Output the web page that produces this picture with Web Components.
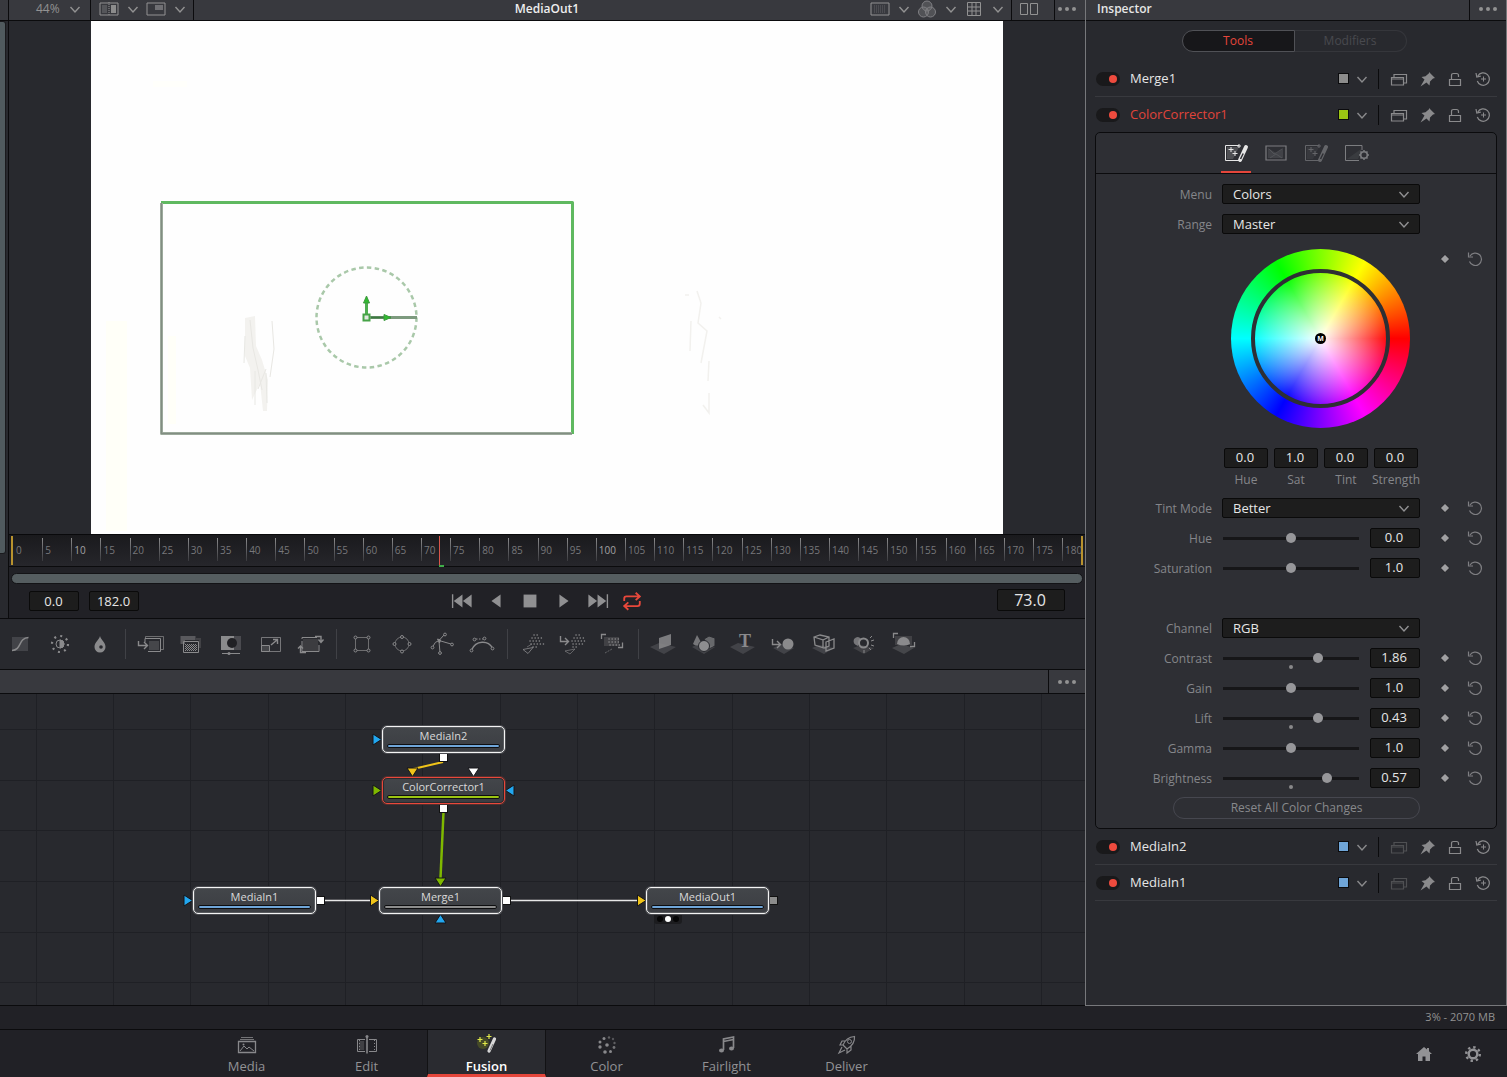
<!DOCTYPE html>
<html lang="en">
<head>
<meta charset="utf-8">
<title>Fusion</title>
<style>
  html, body { margin: 0; height: 100%; background: #212126; }
  body { font-family: "Open Sans", "Noto Sans", sans-serif; font-size: 13px; line-height: 18px; color: #929292; }
</style>
</head>
<body>
<fusion-app></fusion-app>
<script>
const ICONS = {
  chevron: '<path d="M7.500 10l4.500 5 4.500-5" stroke-width="1.400"/>',
  dots: '<g fill="currentColor" stroke="none"><circle cx="5" cy="12" r="2"/><circle cx="12" cy="12" r="2"/><circle cx="19" cy="12" r="2"/></g>',
  split: '<path d="M3 6h18v12H3z"/><path d="M5 8h5v8H5z" fill="#55565a" stroke="none"/><path d="M14 8h5v8h-5z" fill="#8c8c8c" stroke="none"/><path d="M12 5v14" stroke-dasharray="1 1"/>',
  pip: '<path d="M3 6h18v12H3z"/><path d="M11 8h8v5h-8z" fill="#707074" stroke="none"/>',
  roi: '<path d="M3 6h18v12H3z"/><path d="M6 9h12M6 11h12M6 13h12M6 15h12" stroke-dasharray="1 1" stroke="#606165"/>',
  rgb: '<g fill="#77777b" fill-opacity=".4" stroke="#808084"><circle cx="12" cy="9" r="5"/><circle cx="8.500" cy="15" r="5"/><circle cx="15.500" cy="15" r="5"/></g>',
  grid: '<path d="M5.500 5.500h13v13h-13zM10 5v14M14 5v14M5 10h14M5 14h14"/>',
  dual: '<path d="M3.500 6.500h7v11h-7zM13.500 6.500h7v11h-7z"/>',
  windows: '<path d="M4.500 10.500h12v7.500h-12zM4.500 12h12" stroke-width="1.200"/><path d="M7 10V7.500h12.500v8.500H17" stroke-width="1.200"/>',
  pin: '<path d="M14 5l6 6-2 .5-3 3-.5 4-3-3L5.500 19.500l4-7-3-2.500 4-.7 3.500-3z" fill="currentColor" stroke="none"/>',
  lock: '<path d="M6.500 12.500h11v6h-11z" stroke-width="1.200"/><path d="M8.500 12V8.500Q8.500 6.500 10.500 6.500h3Q15.500 6.500 15.500 8.500V10" stroke-width="1.200"/>',
  history: '<path d="M6.800 9A6.200 6.200 0 1 1 6.300 14M5 6l.8 4 4-.8" stroke-width="1.200"/><path d="M12.500 9.500v5M10 12h5"/>',
  undo: '<path d="M7 9A6.200 6.200 0 1 1 6.500 14.500M5.500 5.500v4.500H10" stroke-width="1.200"/>',
  key: '<path d="M12 6.500l5.500 5.500-5.500 5.500L6.500 12z" fill="#a0a0a2" stroke="#17171a"/>',
  wandTab: '<path d="M15 4.500H1.500v15h16"/><path d="M3 6h12l-6 12H3z" fill="currentColor" opacity=".18" stroke="none"/><path d="M22 6l-6 13" stroke-width="4" stroke-linecap="round"/><path d="M19.200 12.500L16.500 18" stroke="#2e2f34" stroke-width="1.500"/><path d="M7 6v5M4.500 8.500h5M11 10v5M8.500 12.500h5M15 3v4M13 5h4"/>',
  blendTab: '<path d="M2 5h20v14H2z" stroke-width="1.200"/><path d="M4 7l8 5 7-5v10H4z" fill="currentColor" opacity=".25" stroke="none"/><path d="M5 8l5 5 8-5M6 17l6-4 6 4" opacity=".3"/>',
  gearTab: '<path d="M18 9V4.500H1.500v15H15"/><path d="M3 18h11l3-6V8z" fill="currentColor" opacity=".15" stroke="none"/><circle cx="20" cy="14" r="3.300" stroke-width="1.600"/><path d="M20 9v1.500M20 17.500V19M15 14h1.500M23.500 14H25M16.500 10.500l1 1M22.500 16.500l1 1M16.500 17.500l1-1M22.500 11.500l1-1" stroke-width="1.500"/>',
  first: '<g fill="currentColor" stroke="none"><path d="M1 4.500h1.500v15H1zM12.500 5v14L3 12zM22.500 5v14L13 12z"/></g>',
  back: '<path d="M17 5v14L7 12z" fill="currentColor" stroke="none"/>',
  stop: '<path d="M5 5h14v14H5z" fill="currentColor" stroke="none"/>',
  play: '<path d="M7 5v14l10-7z" fill="currentColor" stroke="none"/>',
  last: '<g fill="currentColor" stroke="none"><path d="M21.500 4.500H23v15h-1.500zM11.500 5v14L21 12zM1.500 5v14L11 12z"/></g>',
  loop: '<path d="M3.500 12V9.500Q3.500 7 6 7H20M16 3l4.500 4-4.500 4M20.500 12v3q0 2.500-2.500 2.500H4M8 13.500l-4.500 4L8 21.500" stroke-width="2"/>',
  curve: '<path d="M4 5h16v14H4z" fill="currentColor" opacity=".28" stroke="none"/><path d="M4 18.500C14 18 10 6 20.500 5.500" stroke-width="1.500"/>',
  bright: '<circle cx="12" cy="12" r="4"/><path d="M12 8a4 4 0 0 1 0 8z" fill="currentColor"/><circle cx="12" cy="12" r="8" stroke-width="2.200" stroke-dasharray="2 4.283"/>',
  drop: '<path d="M12 4c1 4 5.500 6 5.500 11a5.500 5.500 0 0 1-11 0C6.500 10 11 8 12 4z" fill="currentColor" stroke="none"/><circle cx="13" cy="15" r="1.800" fill="#28292e" stroke="none"/>',
  mediaIn: '<path d="M6.500 7V4.500h18v13H22" opacity=".7"/><path d="M6 10V6.500h15.500v13H9" /><path d="M10 9h10v9H10z" fill="currentColor" opacity=".3" stroke="none"/><path d="M-.5 9v4.500H8M5 10l3.500 3.500L5 17" stroke-width="1.400"/>',
  merge: '<path d="M1.500 4h15v4H6v4H1.500z" fill="currentColor" opacity=".5" stroke="none"/><path d="M17 6h5v10h-2V8h-3z" fill="currentColor" opacity=".25" stroke="none"/><path d="M4.500 9.500h15v11h-15z"/><path d="M6 12.500h12M6 14.500h12M6 16.500h12M6 18.500h12" stroke-dasharray="1 1"/><path d="M7 13.500h12M7 15.500h12M7 17.500h12" stroke-dasharray="1 1"/>',
  matte: '<path d="M2 4h13v14H2z" fill="currentColor" stroke="none"/><path d="M13 4h9v14h-9z" fill="currentColor" opacity=".35" stroke="none"/><circle cx="13" cy="11" r="5" fill="#202024" stroke="none"/><path d="M3 21.500h18"/><circle cx="10" cy="21.500" r="1.500" fill="currentColor" stroke="none"/>',
  resize: '<path d="M2.500 5.500h19v14h-19z" opacity=".8"/><path d="M2.500 13.500h8v6h-8z" fill="#45464a"/><path d="M12 13l6-5M14 7.500h4.500V12" stroke-width="1.400"/>',
  xform: '<path d="M3 9v10.500h17V13M3 7V5.500h15" /><path d="M4 7h15v12H4z" fill="currentColor" opacity=".2" stroke="none"/><path d="M16 4.500h6V10M19.500 7.500L22 10.500l2.500-3M7 20.500H1.500V14M-1 16.500L1.500 14 4 16.500" stroke-width="1.400"/>',
  rect: '<path d="M5.500 5.500h13v13h-13z" opacity=".7"/><g fill="#28292e"><circle cx="5.500" cy="5.500" r="1.500"/><circle cx="18.500" cy="5.500" r="1.500"/><circle cx="5.500" cy="18.500" r="1.500"/><circle cx="18.500" cy="18.500" r="1.500"/></g>',
  ellipse: '<circle cx="12" cy="12" r="7" opacity=".7"/><g fill="#28292e"><circle cx="12" cy="5" r="1.500"/><circle cx="12" cy="19.500" r="1.500"/><circle cx="4.500" cy="12" r="1.500"/><circle cx="19.500" cy="12" r="1.500"/></g>',
  poly: '<path d="M2.500 15Q5 9 9 8.500L21 12M9 8.500L14 3M9 9l1 12" /><g fill="#28292e"><circle cx="2.500" cy="15.500" r="1.400"/><circle cx="22" cy="12.500" r="1.400"/><circle cx="15" cy="2.500" r="1.400"/><circle cx="10" cy="21" r="1.400"/></g><path d="M7.500 7l3 1-1 3z" fill="currentColor"/>',
  bspline: '<path d="M1.500 18C6 8 18 8 22.500 16" stroke-width="1.400"/><path d="M6 7h7" stroke-dasharray="1.500 1.500"/><g fill="#28292e"><circle cx="1.500" cy="18.500" r="1.400"/><circle cx="22.500" cy="16.500" r="1.400"/><circle cx="4.500" cy="7.500" r="1.400"/><circle cx="14.500" cy="6.500" r="1.400"/></g>',
  emit: '<g stroke-width="1.500" stroke-linecap="round" stroke-dasharray=".1 3"><path d="M13 3h6M11 6h12M9 9h12M10 12h13M12 15h6"/></g><path d="M2 17.500l10-2-5 6z" opacity=".8"/><path d="M6 15l5-3" opacity=".6"/>',
  emitIn: '<g stroke-width="1.500" stroke-linecap="round" stroke-dasharray=".1 3"><path d="M15 3h6M13 6h12M11 9h14M12 12h10M12 15h6"/></g><path d="M4 19l10-2-5 5z" opacity=".6"/><path d="M-.5 4v5.500H7M4 6l3.500 3.500L4 13" stroke-width="1.400"/>',
  emitOut: '<path d="M3 5h15v9H3z" fill="currentColor" opacity=".25" stroke="none"/><g stroke-width="1.500" stroke-linecap="round" stroke-dasharray=".1 3"><path d="M8 7h10M8 10h12M9 13h10"/></g><path d="M.5 7V2.500H5M21.500 10.500v5H17" stroke-width="1.300"/><path d="M4 21l7-4" stroke-dasharray="2 1" opacity=".6"/>',
  plane: '<path d="M-2 15l9-4 17 4-12 7z" fill="currentColor" opacity=".28" stroke="none"/><path d="M7 6l12-4v11L7 17z" fill="currentColor" stroke="none" opacity=".85"/>',
  shapes: '<path d="M0 15l8-4 15 4-11 7z" fill="currentColor" opacity=".28" stroke="none"/><path d="M5 3l5 9q-5 3-9 0z" fill="currentColor" stroke="none" opacity=".8"/><path d="M12 7l5-3 6 2v8l-6 3z" fill="currentColor" stroke="#28292e" opacity=".65"/><circle cx="12" cy="14" r="5.500" fill="#8e8e90" stroke="#28292e"/>',
  text3d: '<path d="M-2 15l8-4 17 4-12 7z" fill="currentColor" opacity=".28" stroke="none"/><text x="13" y="15" text-anchor="middle" font-family="Liberation Serif, serif" font-weight="700" font-size="18" fill="currentColor" stroke="none">T</text>',
  sphereIn: '<path d="M1 16l8-4 13 4-10 6z" fill="currentColor" opacity=".28" stroke="none"/><circle cx="16" cy="12" r="5.500" fill="currentColor" stroke="none"/><path d="M.5 7v5.500H8M5 9l3.500 3.500L5 16" stroke-width="1.400"/>',
  camera: '<path d="M0 16l7-3 15 3-10 6z" fill="currentColor" opacity=".28" stroke="none"/><path d="M2 5l6-2 9 2v9l-5 2-9-3zM2 5l9 3v8M11 8l6-3M14 10l8-3v9l-8 3z" stroke-width="1.300"/>',
  light: '<path d="M1 16l8-3 13 3-10 6z" fill="currentColor" opacity=".25" stroke="none"/><path d="M2 7q4-4 7 0l-3 7q-6-2-4-7z" fill="currentColor" stroke="none" opacity=".8"/><circle cx="11.500" cy="11" r="4.500" stroke-width="2"/><path d="M18 6l2-2M19 9l3-1M19 13l3 1M17 16l2 2M12 18v3"/>',
  render: '<path d="M0 16l9-4 13 4-10 6z" fill="currentColor" opacity=".3" stroke="none"/><path d="M3 4h17v9H3z" fill="currentColor" opacity=".25" stroke="none"/><path d="M5 12a6.500 7 0 0 1 13 0q-6 3-13 0z" fill="currentColor" stroke="none"/><path d="M1.500 6V1.500H6M22.500 10v4.500H18" stroke-width="1.300"/>',
  media: '<path d="M6 4.500h12M5 6.500h14" opacity=".8"/><path d="M3.500 8.500h17v11h-17z" stroke-width="1.300"/><path d="M5 18l4-5 3 3 2-2 5 4"/><circle cx="8.500" cy="11.500" r="1" fill="currentColor" stroke="none"/>',
  edit: '<path d="M10 6.500H2.500v12H10M14 6.500h7.500v12H14"/><path d="M4 8h5v9H4z" fill="currentColor" opacity=".3" stroke="none"/><path d="M12 3v17.500" stroke-width="1.600"/><circle cx="12" cy="3.500" r="1.500" fill="currentColor" stroke="none"/><path d="M4.500 7v11M19.500 7v11" stroke-dasharray="1 2"/>',
  fusion: '<circle cx="8" cy="10" r="6" fill="#6d7a1c" opacity=".4" stroke="none"/><path d="M19.500 6L14 18" stroke="#d8d8d8" stroke-width="3.200" stroke-linecap="round"/><path d="M18 11l-3 6.500" stroke="#7c7c7c"/><path d="M5 4v5M2.500 6.500h5M10 8v5M7.500 10.500h5M14 1v5M11.500 3.500h5" stroke="#dfe84a" stroke-width="1.200"/>',
  color: '<g fill="currentColor" stroke="none"><circle cx="12" cy="12" r="1.800"/><circle cx="9" cy="5.500" r="1.500"/><circle cx="14" cy="4.500" r="1.200" opacity=".6"/><circle cx="18" cy="6" r="1.200" opacity=".5"/><circle cx="5" cy="9" r="1.500"/><circle cx="19.500" cy="10" r="1.200" opacity=".6"/><circle cx="5" cy="14" r="1.700"/><circle cx="19" cy="14.500" r="1.400" opacity=".8"/><circle cx="10" cy="19" r="1.800"/><circle cx="15.500" cy="18.500" r="1.500"/></g>',
  fairlight: '<path d="M8.500 17V6l10-2v11M8.500 8.500l10-2" stroke-width="1.700"/><ellipse cx="6.500" cy="17.500" rx="2.500" ry="2" fill="currentColor" stroke="none"/><ellipse cx="16.500" cy="15.500" rx="2.500" ry="2" fill="currentColor" stroke="none"/>',
  deliver: '<path d="M8 12C10 7 14 4 19.500 3.500 20 9 17 13 12 16zM8 12H5l2-4h3M12 16v4l4-3v-4M7 14l-3 6 6-3" stroke-width="1.200"/><circle cx="14.500" cy="8.500" r="2"/>',
  home: '<path d="M12 5l-8 7h2v7h4.500v-4.500h3V19H18v-7h2l-3-2.700V6h-2v1.600z" fill="currentColor" stroke="none"/>',
  gear: '<circle cx="12" cy="12" r="4.300" stroke-width="2.400"/><circle cx="12" cy="12" r="6.800" stroke-width="2.400" stroke-dasharray="2.400 2.941"/>'
};

/* Base class: each component supplies a stylesheet and its markup. */
class Base extends HTMLElement {
  connectedCallback() {
    if (this.shadowRoot) return;
    const t = document.createElement('template');
    t.innerHTML = `<style>*{box-sizing:border-box}button,input,select{font:inherit;color:inherit}button{background:none;border:0;padding:0;margin:0}${this.constructor.css || ''}</style>${this.html()}`;
    this.attachShadow({ mode: 'open' }).append(t.content.cloneNode(true));
  }
  a(n, d = '') { return this.getAttribute(n) ?? d; }
}

customElements.define('ui-icon', class extends Base {
  static css = ':host{display:block;flex:none;width:24px;height:24px}svg{display:block;width:100%;height:100%;overflow:visible}';
  html() { return `<svg viewBox="0 0 24 24" fill="none" stroke="currentColor" stroke-width="1" aria-hidden="true">${ICONS[this.a('name')]}</svg>`; }
});

/* Title bar shared by the viewer, node graph and inspector. */
customElements.define('title-bar', class extends Base {
  static css = `:host{display:grid;grid-template:100% / 1fr auto 1fr;flex:none;box-sizing:border-box;height:21px;background:#38393e;border-bottom:1px solid #0b0b0d;color:#929292}
    :host([tall]){height:24px}
    div{display:flex;align-items:stretch}.e{justify-content:flex-end}
    .m{color:#eee;font-size:12px;font-weight:600;line-height:18px}`;
  html() { return '<div><slot name="start"></slot></div><div class="m"><slot></slot></div><div class="e"><slot name="end"></slot></div>'; }
});
customElements.define('bar-cell', class extends Base {
  static css = `:host{display:flex;align-items:center;height:100%;box-sizing:border-box;padding-bottom:3px}
    :host([right]){border-right:1px solid #0b0b0d}:host([left]){border-left:1px solid #0b0b0d}:host([flat]){padding-bottom:0}`;
  html() { return '<slot></slot>'; }
});
customElements.define('icon-button', class extends Base {
  static css = `:host{display:flex;justify-content:center;align-items:center;width:var(--w,24px)}button{display:flex;justify-content:center;width:100%}
   ui-icon{width:var(--s,24px);height:var(--s,24px)}`;
  html() { return `<button type="button" aria-label="${this.a('icon')}"><ui-icon name="${this.a('icon')}"></ui-icon></button>`; }
});

customElements.define('time-ruler', class extends Base {
  static css = `:host{display:block;flex:none;box-sizing:border-box;height:33px;background:linear-gradient(#1a1a1d,#26262b);border-top:1px solid #09090b;border-bottom:1px solid #0b0b0d;padding:1px 2px 0}
    .r{position:relative;height:29px;border:solid #b8922e;border-width:0 2px}
    .t{display:flex;height:100%;overflow:hidden}
    span{flex:5 1 0;min-width:0;padding:7px 0 0 3px;font-size:10px;line-height:14px;color:#77777a;background:linear-gradient(#8a8a8c,#3a3a3e) 0 2px/1px 23px no-repeat;white-space:nowrap}
    span:first-child{background:none}span:last-child{flex-grow:3;overflow:hidden}
    span.b{color:#a2a2a4}
    i{position:absolute;left:calc(73 / 183 * 100%);top:0;width:1px;height:29px;background:#d8564a}
    u{position:absolute;left:calc(73 / 183 * 100%);bottom:-2px;width:5px;height:2px;background:#3fae49}`;
  html() {
    let s = '';
    for (let f = 0; f <= 180; f += 5) s += `<span${f === 10 || f === 100 ? ' class="b"' : ''}>${f}</span>`;
    return `<div class="r"><div class="t">${s}</div><i></i><u></u></div>`;
  }
});

customElements.define('transport-bar', class extends Base {
  static css = `:host{display:block;flex:none;background:#212126;border-bottom:1px solid #0b0b0d;padding-top:6px}
    .s{height:11px;margin:0 2px;border:1px solid #131316;border-radius:6px;background:#555d60}
    .g{display:grid;grid-template-columns:1fr auto 1fr;align-items:center;height:34px}
    .f{display:flex;gap:10px;padding-left:20px}.e{justify-content:flex-end;padding:0 20px 2px 0}
    input{width:50px;height:20px;background:#1d1d1d;border:1px solid #0a0a0a;border-radius:2px;color:#e6e6e6;text-align:center;padding:0 1px 0 0}
    .e input{width:68px;height:22px;font-size:16px;padding-right:2px}
    .m{display:flex;--w:34px;--s:22px;color:#909092}.on{color:#e8483b}`;
  html() { return `<div class="s"></div><div class="g"><div class="f"><input aria-label="Start frame" value="0.0"><input aria-label="End frame" value="182.0"></div>
    <div class="m">${['first','back','stop','play','last'].map(n => `<icon-button icon="${n}"></icon-button>`).join('')}<icon-button class="on" icon="loop"></icon-button></div>
    <div class="f e"><input aria-label="Current frame" value="73.0"></div></div>`; }
});

customElements.define('viewer-frame', class extends Base {
  static css = `:host{display:flex;justify-content:center;flex:1 1 0;min-height:0;background:#28292e}
    .c{height:100%;aspect-ratio:912/513;background:#fefefe}svg{display:block;width:100%;height:100%}`;
  html() { return `<div class="c"><svg viewBox="0 0 912 513" fill="none" role="img" aria-label="Viewer">
    <path d="M15 300h21v210H15zM77 315h8v88h-8z" fill="#fffff8"/><path d="M62 60h34v6H62z" fill="#fffffb"/>
    <path d="M154 297l10-2 1 30 6 14 6 20-1 31h-4l-3-28-8 17-2-32-5-12z" fill="#f3f2ef"/><path d="M159 299l3 28 5 22 4 20M167 368l8-20M181 300l2 28-4 28" stroke="#e8e7e3"/>
    <path d="M154 315l-1 27M164 350v34M175 352l1 30" stroke="#e8e8e4"/>
    <path d="M606 270l4 12-3 20 9 8-6 32M594 274l4 0M628 296l2 2M618 340l-1 20M612 384l6 8v-20M600 300l-1 30" stroke="#f2f1ee" stroke-width="1.500"/>
    <path d="M70 181.500h411.500V413" stroke="#5fb960" stroke-width="3" stroke-linejoin="round"/>
    <path d="M70.500 182v230.500H481" stroke="#a5b5a5" stroke-width="3" stroke-linejoin="round"/><path d="M70.500 182v230.500H481" stroke="#828d82" stroke-width="1.500"/>
    <circle cx="275.500" cy="296.500" r="50" stroke="#a9c8a9" stroke-width="2.500" stroke-dasharray="4.500 3.354"/>
    <path d="M276 296.500h50" stroke="#7d9a7e" stroke-width="3"/><path d="M280 296.500h20" stroke="#3c7a40" stroke-width="2"/><path d="M275.500 294v-14" stroke="#4fae50" stroke-width="3"/>
    <path d="M275.500 275l3 7h-6zM300 296.500l-7-3v6z" fill="#2fbb2f" stroke="#3f9a40"/><path d="M272.500 293.500h6v6h-6z" fill="#dfe8df" stroke="#46a347" stroke-width="2"/>
  </svg></div>`; }
});

customElements.define('viewer-panel', class extends Base {
  static css = `:host{display:flex;flex:1 1 0;min-height:0}
    .strip{display:flex;flex-direction:column;width:9px;flex:none;border-right:1px solid #0b0b0d;border-bottom:1px solid #0b0b0d;background:#28292e}
    .thumb{height:calc(100% - 64px);width:6px;background:#505a5e;border-radius:0 3px 3px 0;border:1px solid #1a1a1d;border-left:0}
    .track{flex:1;min-height:0}
    .v{flex:1;min-width:0;display:flex;flex-direction:column}
    .z{display:flex;align-items:center;padding-left:27px;line-height:18px;font-size:12px}
    bar-cell{--s:24px}.c{--w:23px}.k{--w:24px}`;
  html() { return `<div class="strip"><title-bar></title-bar><div class="track"><div class="thumb"></div></div></div><div class="v">
    <title-bar><bar-cell slot="start" right style="width:82px"><button class="z" type="button">44%</button><icon-button style="--w:32px" icon="chevron"></icon-button></bar-cell>
    <bar-cell slot="start" right style="width:103px;padding-left:6px"><icon-button class="k" icon="split"></icon-button><icon-button class="c" icon="chevron"></icon-button><icon-button class="k" icon="pip"></icon-button><icon-button class="c" icon="chevron"></icon-button></bar-cell>
    MediaOut1
    <bar-cell slot="end" style="padding-right:2px"><icon-button class="k" icon="roi"></icon-button><icon-button class="c" icon="chevron"></icon-button><icon-button class="k" icon="rgb"></icon-button><icon-button class="c" icon="chevron"></icon-button><icon-button class="k" icon="grid"></icon-button><icon-button class="c" icon="chevron"></icon-button></bar-cell>
    <bar-cell slot="end" left style="padding-left:5px;width:43px"><icon-button icon="dual"></icon-button></bar-cell>
    <bar-cell slot="end" left style="width:31px"><icon-button icon="dots"></icon-button></bar-cell></title-bar>
    <viewer-frame></viewer-frame><time-ruler></time-ruler><transport-bar></transport-bar></div>`; }
});

customElements.define('tool-shelf', class extends Base {
  static css = `:host{display:flex;align-items:center;flex:none;box-sizing:border-box;height:51px;background:#28292e;border-bottom:1px solid #0b0b0d;color:#8a8a8c;--w:40px}
    hr{width:1px;height:30px;margin:0 5px;border:0;background:#404146}`;
  html() { return [['curve','bright','drop'],['mediaIn','merge','matte','resize','xform'],['rect','ellipse','poly','bspline'],['emit','emitIn','emitOut'],['plane','shapes','text3d','sphereIn','camera','light','render']]
    .map(g => g.map(n => `<icon-button icon="${n}"></icon-button>`).join('')).join('<hr>'); }
});

customElements.define('graph-node', class extends Base {
  static css = `:host{position:absolute;display:block;box-sizing:border-box;width:123px;height:27px;padding:1px 4px 0;border:1px solid #f4f4f4;border-radius:5px;background:linear-gradient(#43464a,#3b3d42);box-shadow:0 0 0 1px #4a4b50,inset 0 0 0 1px #5a5c60;color:#d9d9d9;font-size:11px;line-height:16px;text-align:center}
    :host([selected]){border-color:#e8483b;box-shadow:0 0 0 1px #55302f,inset 0 0 0 1px #2a2a2e}
    i{display:block;height:4px;border:1px solid #0e0e10;border-radius:2px;background:var(--c)}`;
  html() { return '<slot></slot><i></i>'; }
});

customElements.define('node-graph', class extends Base {
  static css = `:host{display:flex;flex-direction:column;flex:0 0 336px}
    .c{position:relative;flex:1;background:#28292e;border-bottom:1px solid #0b0b0d;overflow:hidden}
    svg{position:absolute;inset:0;width:100%;height:100%}
    .v{position:absolute;left:654px;top:219px;display:flex;justify-content:center;align-items:center;gap:2px;width:28px;height:11px;background:#1c1c1f;border-radius:0 0 3px 3px}
    .v i{width:6px;height:6px;border-radius:50%;background:#050506}.v i:nth-child(2){background:#fff}`;
  html() {
    const tri = (x, y, dir, c) => `<path d="M-4-5.500L4.500 0-4 5.500z" transform="translate(${x} ${y}) rotate(${dir})" fill="${c}" stroke="#151518" stroke-width="1"/>`;
    const sq = (x, y, c = '#fff') => `<rect x="${x - 4}" y="${y - 4}" width="8" height="8" fill="${c}" stroke="#111"/>`;
    const B = '#22a7f0', Y = '#f0c419', G = '#7fb800', W = '#fff';
    return `<title-bar tall><bar-cell slot="end" left flat style="width:37px;padding-left:6px"><icon-button icon="dots"></icon-button></bar-cell></title-bar>
    <div class="c"><svg aria-hidden="true"><defs><pattern id="g" x="36" y="35" width="232" height="152" patternUnits="userSpaceOnUse"><path d="M.5 0v152M77.500 0v152M154.500 0v152M0 .5h232M0 51.500h232M0 101.500h232" stroke="#1f2025"/></pattern></defs>
    <rect width="100%" height="100%" fill="url(#g)"/>
    <path d="M443 68L413 75" stroke="${Y}" stroke-width="2"/><path d="M443.500 118L440.500 184" stroke="${G}" stroke-width="2.500"/><path d="M324 206.500h47M510 206.500h128" stroke="#e8e8e8" stroke-width="1.400"/>
    ${tri(377,45.5,0,B)}${tri(412.500,78,90,Y)}${tri(473.500,78,90,W)}${tri(377,96.500,0,G)}${tri(510,96.500,180,B)}${tri(440.500,188,90,G)}${tri(440.500,225,270,B)}${tri(188,206.500,0,B)}${tri(374.500,206.500,0,Y)}${tri(641.500,206.500,0,Y)}
    ${sq(443.500,63.500)}${sq(443.500,114.500)}${sq(320.500,206.500)}${sq(506.500,206.500)}${sq(773.500,206.500,'#8c8c8c')}</svg>
    <div class="v"><i></i><i></i><i></i></div>
    <graph-node style="left:382px;top:32px;--c:#6fa5d8">MediaIn2</graph-node>
    <graph-node selected style="left:382px;top:83px;--c:#9bc413">ColorCorrector1</graph-node>
    <graph-node style="left:193px;top:193px;--c:#6fa5d8">MediaIn1</graph-node>
    <graph-node style="left:379px;top:193px;--c:#8c8c8c">Merge1</graph-node>
    <graph-node style="left:646px;top:193px;--c:#6fa5d8">MediaOut1</graph-node></div>`;
  }
});

customElements.define('tool-header', class extends Base {
  static css = `:host{display:flex;align-items:center;height:36px;box-sizing:border-box;padding-left:1px;border-bottom:1px solid #38393e;color:#8a8a8c;--w:28px;--s:24px}
    :host([open]){border-bottom:0;height:35px}
    input{appearance:none;display:flex;align-items:center;justify-content:flex-end;width:24px;height:14px;margin:0 10px 0 0;padding-right:3px;border-radius:7px;background:#19191b}
    input::before{content:"";width:8px;height:8px;border-radius:50%;background:#ee4b3e}
    label{flex:1;padding-bottom:2px;color:#e6e6e6;line-height:18px}:host([open]) label{color:#e0443a}
    i{width:11px;height:11px;border:1px solid #0b0b0d;background:var(--c)}
    hr{width:1px;height:20px;margin:0 6px 0 3px;border:0;background:#0b0b0d}
    .c{--w:26px}.dim{opacity:.4}`;
  html() { return `<input id="on" type="checkbox" role="switch" checked><label for="on"><slot></slot></label><i></i><icon-button class="c" icon="chevron"></icon-button><hr>
    <icon-button${this.hasAttribute('plain') ? ' class="dim"' : ''} icon="windows"></icon-button><icon-button icon="pin"></icon-button><icon-button icon="lock"></icon-button><icon-button icon="history"></icon-button>`; }
});

customElements.define('control-row', class extends Base {
  static css = `:host{display:grid;grid-template-columns:1fr 198px 76px;align-items:center;height:30px;color:#85868a}
    :host([wheel]){box-sizing:border-box;height:209px;align-items:start;padding-top:10px}
    label{padding:2px 10px 0 0;text-align:right;font-size:12px}
    .k{display:flex;align-items:center;height:20px;padding-left:14px;color:#7e7e82;--w:22px;--s:20px}.k>:last-child{--s:24px;margin-left:8px}
    .d{display:grid;align-items:center;color:#909092}
    .d>*{grid-area:1/1}.d ui-icon{justify-self:end;margin-right:4px;pointer-events:none}
    select{appearance:none;width:100%;height:20px;padding:0 10px 1px;background:#1d1d1d;border:1px solid #0a0a0a;border-radius:2px;color:#e6e6e6}
    .s{display:grid;grid-template-columns:138px 50px;gap:10px;align-items:center}
    .n{width:50px;height:20px;background:#1d1d1d;border:1px solid #0a0a0a;border-radius:2px;color:#e6e6e6;text-align:center;padding:0 2px 2px 0}
    .t{position:relative;display:flex;height:20px}
    .t b{position:absolute;left:50%;bottom:-1px;width:4px;height:4px;margin-left:-2px;border-radius:50%;background:#88888a}
    input[type=range]{appearance:none;width:136px;height:20px;margin:0 1px;background:linear-gradient(#161618,#161618) center/100% 3px no-repeat}
    input[type=range]::-webkit-slider-thumb{appearance:none;width:10px;height:10px;border-radius:50%;background:#97979a}`;
  html() {
    const k = this.a('kind'), l = this.a('label'), v = this.a('value');
    const keys = '<div class="k"><icon-button icon="key"></icon-button><icon-button icon="undo"></icon-button></div>';
    if (k === 'select') return `<label for="c">${l}</label><div class="d"><select id="c"><option>${v}</option></select><ui-icon name="chevron"></ui-icon></div>${this.hasAttribute('keyed') ? keys : ''}`;
    if (k === 'slider') return `<label for="c">${l}</label><div class="s"><div class="t"><input id="c" type="range" min="0" max="1000" value="${this.a('at', '500')}">${this.hasAttribute('at') ? '<b></b>' : ''}</div><input class="n" aria-label="${l} value" value="${v}"></div>${keys}`;
    return `<span></span><slot></slot>${keys}`;
  }
});

customElements.define('color-wheel', class extends Base {
  static css = `:host{display:grid;place-items:center;margin-left:9px;width:179px;height:179px;border-radius:50%;--hues:red,#f0f,#00f,#0ff,#0f0,#ff0,red;background:conic-gradient(from 90deg,var(--hues))}
    .i{display:grid;place-items:center;width:139px;height:139px;border:4px solid #2e2f34;border-radius:50%;background:radial-gradient(closest-side,#fff,rgba(255,255,255,0)),conic-gradient(from 90deg,var(--hues));background-origin:border-box}
    b{width:11px;height:11px;border-radius:50%;background:#000;color:#fff;font-size:7px;line-height:11px;text-align:center}`;
  html() { return '<div class="i"><b>M</b></div>'; }
});

customElements.define('wheel-fields', class extends Base {
  static css = `:host{display:flex;justify-content:center;gap:6px;padding-left:50px;height:45px;color:#85868a}
    label{display:flex;flex-direction:column;align-items:center;gap:3px;width:44px;font-size:12px;white-space:nowrap}
    input{width:100%;height:20px;background:#1d1d1d;border:1px solid #0a0a0a;border-radius:2px;color:#e6e6e6;text-align:center;padding:0 2px 2px 0;font-size:13px}`;
  html() { return [['Hue','0.0'],['Sat','1.0'],['Tint','0.0'],['Strength','0.0']].map(([l, v]) => `<label><input value="${v}"><span>${l}</span></label>`).join(''); }
});

customElements.define('inspector-panel', class extends Base {
  static css = `:host{display:flex;flex-direction:column;box-sizing:border-box;flex:0 0 422px;border:solid #77787b;border-width:0 1px 1px;background:#28292e;overflow:hidden}
    .h{padding-left:11px;color:#e6e6e6;font-weight:600;font-size:12px}
    .tabs{display:flex;align-self:center;width:225px;height:22px;margin:9px 4px 9px 0}
    .tabs button{flex:1;border:1px solid #35363b;border-left:0;border-radius:0 11px 11px 0;color:#48494e;font-size:12px;line-height:18px}
    .tabs .on{border:1px solid #505156;border-radius:11px 0 0 11px;background:#17171a;color:#e5463b}
    .b{padding:0 9px}
    .p{background:#2e2f34;border:1px solid #0b0b0d;border-radius:5px;padding-bottom:9px}
    .pt{display:flex;justify-content:center;height:41px;border-bottom:1px solid #0b0b0d;margin-bottom:5px;color:#7c7d80;gap:10px}
    .pt icon-button{box-sizing:border-box;--w:30px;padding-top:2px;border-bottom:2px solid transparent}.pt .on{color:#e6e6e6;border-color:#e5463b}.pt .dim{opacity:.7}
    .gap{height:30px}
    .reset{display:block;width:247px;height:22px;margin:4px 76px 0 auto;border:1px solid #46474f;border-radius:11px;color:#88898c;font-size:12px;line-height:18px}`;
  html() {
    const sl = (l, v, at) => `<control-row kind="slider" label="${l}" value="${v}"${at ? ` at="${at}"` : ''}></control-row>`;
    return `<title-bar><div class="h" slot="start">Inspector</div><bar-cell slot="end" left style="width:37px;padding-left:6px"><icon-button icon="dots"></icon-button></bar-cell></title-bar>
    <div class="tabs" role="tablist"><button class="on" role="tab" type="button">Tools</button><button role="tab" type="button">Modifiers</button></div>
    <div class="b"><tool-header style="--c:#8c8c8c">Merge1</tool-header><tool-header open style="--c:#9bc413">ColorCorrector1</tool-header>
    <div class="p"><div class="pt"><icon-button class="on" icon="wandTab"></icon-button><icon-button icon="blendTab"></icon-button><icon-button class="dim" icon="wandTab"></icon-button><icon-button icon="gearTab"></icon-button></div>
    <control-row kind="select" label="Menu" value="Colors"></control-row><control-row kind="select" label="Range" value="Master"></control-row>
    <control-row wheel><color-wheel></color-wheel></control-row><wheel-fields></wheel-fields>
    <control-row kind="select" keyed label="Tint Mode" value="Better"></control-row>${sl('Hue','0.0')}${sl('Saturation','1.0')}<div class="gap"></div>
    <control-row kind="select" label="Channel" value="RGB"></control-row>${sl('Contrast','1.86','714')}${sl('Gain','1.0')}${sl('Lift','0.43','714')}${sl('Gamma','1.0')}${sl('Brightness','0.57','786')}
    <button class="reset" type="button">Reset All Color Changes</button></div>
    <tool-header plain style="--c:#6fa5d8">MediaIn2</tool-header><tool-header plain style="--c:#6fa5d8">MediaIn1</tool-header></div>`;
  }
});

customElements.define('page-tabs', class extends Base {
  static css = `:host{display:flex;justify-content:space-between;flex:none;box-sizing:border-box;height:47px;padding:0 10px 0 186px;background:#212126;color:#929295}
    nav,div{display:flex}div{align-items:center;--w:49px}
    a{display:flex;flex-direction:column;align-items:center;width:120px;padding:3px 0 0 1px;color:inherit;text-decoration:none;border-bottom:3px solid transparent}
    a.on{width:119px;margin-left:1px;padding-left:0;border-left:1px solid #121214;border-right:1px solid #121214;background:#2a2b30;border-bottom-color:#e5463b;color:#fff;font-weight:600}
    ui-icon{color:#88888b}`;
  html() { return `<nav>${['Media','Edit','Fusion','Color','Fairlight','Deliver'].map(n => `<a href="#${n}"${n === 'Fusion' ? ' class="on"' : ''}><ui-icon name="${n.toLowerCase()}"></ui-icon>${n}</a>`).join('')}</nav><div><icon-button icon="home"></icon-button><icon-button icon="gear"></icon-button></div>`; }
});

customElements.define('fusion-app', class extends Base {
  static css = `:host{display:flex;flex-direction:column;height:100vh;min-height:900px;overflow:hidden}
    main{display:flex;flex:1;min-height:0}.w{display:flex;flex-direction:column;flex:1;min-width:0}
    .st{flex:none;height:24px;padding-right:12px;background:#212126;border-bottom:1px solid #0b0b0d;text-align:right;font-size:11px;line-height:22px}`;
  html() { return '<main><div class="w"><viewer-panel></viewer-panel><tool-shelf></tool-shelf><node-graph></node-graph></div><inspector-panel></inspector-panel></main><div class="st">3% - 2070 MB</div><page-tabs></page-tabs>'; }
});
</script>
</body>
</html>
